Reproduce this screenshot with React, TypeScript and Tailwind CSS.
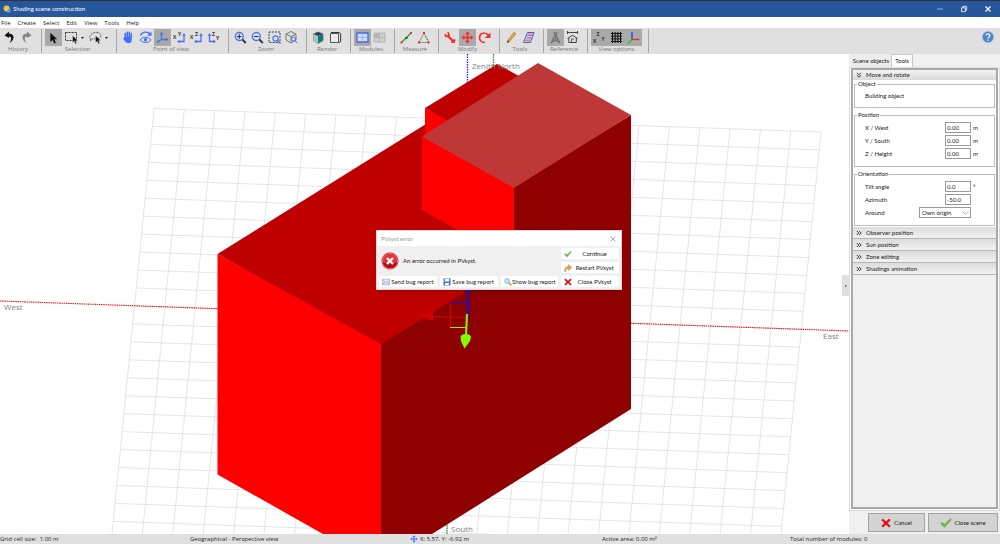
import { useState, type ReactNode } from 'react'
import clsx from 'clsx'

const BLUE = '#4370f5'
const RED = '#f52a2a'

function Icon({ children }: { children: ReactNode }) {
  return (
    <svg viewBox="0 0 17 17" className="h-[17px] w-[17px]" fill="none" aria-hidden="true">
      {children}
    </svg>
  )
}

function AxisLetter({ x, y, children }: { x: number; y: number; children: string }) {
  return (
    <text x={x} y={y} fontSize="5" fontWeight="700" fill="#333">
      {children}
    </text>
  )
}

const cursor = 'M0 0 L0 8 L1.9 6.4 L3.4 9.4 L4.9 8.7 L3.5 5.8 L6 5.6 Z'
const arrow = 'M8 2.5 L3.5 6.5 L8 9 V7.4 C11 7.4 10.5 11 8.5 14.3 C13.5 11.5 14.5 5 8 4.6 Z'
const moveCross =
  'M8.5 2.5 L11 5.3 H9.3 V7.7 H11.7 V6 L14.5 8.5 L11.7 11 V9.3 H9.3 V11.7 H11 L8.5 14.5 L6 11.7 H7.7 V9.3 H5.3 V11 L2.5 8.5 L5.3 6 V7.7 H7.7 V5.3 H6 Z'

type Tool = { name: string; icon: ReactNode; active?: boolean; menu?: boolean }

const GROUPS: { label: string; tools: Tool[] }[] = [
  {
    label: 'History',
    tools: [
      { name: 'Undo', icon: <path d={arrow} fill="#111" /> },
      { name: 'Redo', icon: <path d={arrow} fill="#858585" transform="matrix(-1 0 0 1 17 0)" /> },
    ],
  },
  {
    label: 'Selection',
    tools: [
      {
        name: 'Select',
        active: true,
        icon: <path d={cursor} fill="#111" transform="translate(5.3 3.7) scale(1.15)" />,
      },
      {
        name: 'Rectangle selection',
        menu: true,
        icon: (
          <>
            <path d="M3.5 3.5 H14.5 V11.5 H3.5 Z" stroke="#333" strokeDasharray="2 1" />
            <path d={cursor} fill="#111" stroke="#e0e0e0" strokeWidth="0.5" transform="translate(10.5 6.5) scale(0.9)" />
          </>
        ),
      },
      {
        name: 'Lasso selection',
        menu: true,
        icon: (
          <>
            <path d="M5 11 C1 7 7 2.5 12 3.5 C17 5 15 10 9.5 10 C6 10 5 9 4.5 12" stroke="#555" strokeDasharray="2 1" />
            <path d={cursor} fill="#111" stroke="#e0e0e0" strokeWidth="0.5" transform="translate(9.5 6.5) scale(0.9)" />
          </>
        ),
      },
    ],
  },
  {
    label: 'Point of view',
    tools: [
      {
        name: 'Pan',
        icon: (
          <path
            d="M5.2 8 V4.6 M7.2 8 V3.4 M9.2 8 V3.2 M11.2 8 V4.6 M5.2 8.5 H11 V10.5 C11 13 10 13.5 8.5 13.5 C6.5 13.5 5.5 12 4 9.5"
            stroke={BLUE}
            strokeWidth="1.6"
            strokeLinecap="round"
            fill={BLUE}
          />
        ),
      },
      {
        name: 'Orbit',
        icon: (
          <>
            <path d="M3.5 6.5 C5 2.5 10.5 2 13 5" stroke={BLUE} strokeWidth="1.3" />
            <path d="M14.5 2.5 V6.8 H10.2 Z" fill={BLUE} />
            <path d="M3 11 C5.5 7.3 11.5 7.3 14 11 C11.5 14.3 5.5 14.3 3 11 Z" stroke={BLUE} />
            <circle cx="8.5" cy="10.8" r="1.7" fill={BLUE} />
          </>
        ),
      },
      {
        name: 'Perspective',
        active: true,
        icon: (
          <>
            <path d="M7.5 4.5 V10.5 H13 M7.5 10.5 L4 12.5" stroke={BLUE} strokeWidth="1.3" />
            <path d="M7.5 2.8 L9.3 5.5 H5.7 Z M14.5 10.5 L11.8 12.3 V8.7 Z M2.5 13.4 L4 10.7 L5.8 13.4 Z" fill={BLUE} />
          </>
        ),
      },
      {
        name: 'Top view',
        icon: (
          <>
            <AxisLetter x={2} y={10}>X</AxisLetter>
            <AxisLetter x={7} y={6.5}>Y</AxisLetter>
            <path d="M13 6 V12.5 H8" stroke={BLUE} strokeWidth="1.3" />
            <path d="M13 4 L14.8 6.7 H11.2 Z M6 12.5 L8.7 10.7 V14.3 Z" fill={BLUE} />
          </>
        ),
      },
      {
        name: 'Front view',
        icon: (
          <>
            <AxisLetter x={2} y={10}>X</AxisLetter>
            <AxisLetter x={7} y={6.5}>Z</AxisLetter>
            <path d="M13 6 V12.5 H8" stroke={BLUE} strokeWidth="1.3" />
            <path d="M13 4 L14.8 6.7 H11.2 Z M6 12.5 L8.7 10.7 V14.3 Z" fill={BLUE} />
          </>
        ),
      },
      {
        name: 'Side view',
        icon: (
          <>
            <AxisLetter x={7} y={6.5}>Z</AxisLetter>
            <AxisLetter x={11} y={11}>Y</AxisLetter>
            <path d="M4.5 6 V12.5 H9" stroke={BLUE} strokeWidth="1.3" />
            <path d="M4.5 4 L6.3 6.7 H2.7 Z M11 12.5 L8.3 10.7 V14.3 Z" fill={BLUE} />
          </>
        ),
      },
    ],
  },
  {
    label: 'Zoom',
    tools: [
      {
        name: 'Zoom in',
        icon: (
          <>
            <circle cx="7.3" cy="7.5" r="4" stroke={BLUE} strokeWidth="1.3" />
            <path d="M5 7.5 H9.6 M7.3 5.2 V9.8" stroke="#333" strokeWidth="1.1" />
            <path d="M10.3 10.5 L13.8 14" stroke="#333" strokeWidth="1.8" />
          </>
        ),
      },
      {
        name: 'Zoom out',
        icon: (
          <>
            <circle cx="7.3" cy="7.5" r="4" stroke={BLUE} strokeWidth="1.3" />
            <path d="M5 7.5 H9.6" stroke="#333" strokeWidth="1.1" />
            <path d="M10.3 10.5 L13.8 14" stroke="#333" strokeWidth="1.8" />
          </>
        ),
      },
      {
        name: 'Zoom window',
        icon: (
          <>
            <path d="M3 3 H14 V13.5 H3 Z" stroke="#444" strokeDasharray="2 1" />
            <circle cx="9.5" cy="9.5" r="2.6" stroke={BLUE} strokeWidth="1.1" fill="#e0e0e0" />
            <path d="M11.5 11.5 L14.5 14.5" stroke={BLUE} strokeWidth="1.4" />
          </>
        ),
      },
      {
        name: 'Zoom all',
        icon: (
          <>
            <path d="M8 2.5 L13 5 V11 L8 14 L3 11 V5 Z M3 5 L8 7.5 L13 5 M8 7.5 V14" stroke="#777" />
            <circle cx="10.5" cy="10" r="2" stroke={BLUE} fill="#e0e0e0" />
            <path d="M12 11.5 L14 14" stroke={BLUE} />
          </>
        ),
      },
    ],
  },
  {
    label: 'Render',
    tools: [
      {
        name: 'Shaded',
        icon: (
          <>
            <path d="M8 3 L13 5 V11.5 L8 14.5 L3.5 11.5 V5 Z" fill="#fff" stroke="#444" strokeWidth="0.6" />
            <path d="M8 7 L13 5 V11.5 L8 14.5 Z" fill="#157878" />
            <path d="M3.5 5 L8 7 V14.5 L3.5 11.5 Z" fill="#a5c4c2" />
            <path d="M8 3 L13 5 L8 7 L3.5 5 Z" fill="#21484a" />
          </>
        ),
      },
      {
        name: 'Wireframe',
        icon: (
          <>
            <path d="M3.5 4.5 H11.5 V13.5 H3.5 Z" stroke="#555" fill="#eaeaea" />
            <path d="M4 3.5 H12.5 L13.7 5 V12.5 L12 13.7" stroke="#333" />
          </>
        ),
      },
    ],
  },
  {
    label: 'Modules',
    tools: [
      {
        name: 'Module table',
        active: true,
        icon: (
          <>
            <path d="M3 4 H14 V13 H3 Z" fill="#d2dcff" stroke="#3f6ae0" strokeWidth="1.3" />
            <path d="M3 8.5 H14 M8.5 4 V13" stroke="#8fa5e8" strokeWidth="0.7" />
          </>
        ),
      },
      {
        name: 'Module layout',
        icon: (
          <>
            <path d="M3 4 H14 V13 H3 Z" fill="#cfcfcf" stroke="#b4b4b4" />
            <path d="M3 8.5 H14 M8.5 4 V13" stroke="#b4b4b4" />
            <path d="M3.5 4.5 H8 V8 H3.5 Z" fill="#b4b4b4" />
          </>
        ),
      },
    ],
  },
  {
    label: 'Measure',
    tools: [
      {
        name: 'Distance',
        icon: (
          <>
            <path d="M3.5 13.5 L13 4" stroke="#249a36" strokeWidth="1.3" />
            <path d="M7.5 8 H9.5 V10 H7.5 Z" fill="#124f1c" />
            <path d="M2.5 12.5 H4.5 V14.5 H2.5 Z M12 3 H14 V5 H12 Z" fill={RED} />
          </>
        ),
      },
      {
        name: 'Angle',
        icon: (
          <>
            <path d="M9 4 L4 13.5 H13.5" stroke="#777" strokeDasharray="2 0.7" />
            <path d="M9 4 L13.5 13" stroke="#249a36" strokeWidth="1.2" strokeDasharray="2 1" />
            <path d="M8 3 H10 V5 H8 Z M3 12.5 H5 V14.5 H3 Z M12.5 12.5 H14.5 V14.5 H12.5 Z" fill={RED} />
          </>
        ),
      },
    ],
  },
  {
    label: 'Modify',
    tools: [
      {
        name: 'Properties',
        icon: (
          <>
            <path d="M6 7 L12 13" stroke={RED} strokeWidth="2.2" strokeLinecap="round" />
            <path d="M6 3 L7 6.5 L4 7.5 L3 5 M10 14 L10.5 11.5 L13.5 11" stroke={RED} strokeWidth="1.6" />
          </>
        ),
      },
      { name: 'Move', active: true, icon: <path d={moveCross} fill={RED} /> },
      {
        name: 'Rotate',
        icon: (
          <>
            <path d="M9 13.5 C1.5 13.5 2 3.8 8.5 4 C10.5 4 11.5 5 12.3 6.2" stroke={RED} strokeWidth="1.7" />
            <path d="M14.5 3.5 V9 H9 Z" fill={RED} />
          </>
        ),
      },
    ],
  },
  {
    label: 'Tools',
    tools: [
      {
        name: 'Edit',
        icon: (
          <>
            <path d="M4 14 L4.8 11.2 L11 3.3 L13 4.8 L6.7 12.6 Z" fill="#e5a836" stroke="#8d6a2b" strokeWidth="0.5" />
            <path d="M4 14 L4.8 11.2 L6.7 12.6 Z" fill="#5b4a33" />
          </>
        ),
      },
      {
        name: 'Partition',
        icon: (
          <>
            <path d="M7.5 3.5 H14 L10.5 13.5 H3.5 Z" fill="#e8edff" stroke="#415fc4" />
            <path d="M6.5 6.5 H13 M5.5 10 H12" stroke="#415fc4" strokeWidth="0.7" />
            <path d="M8 5 H12.5 M7 8.3 H11.5 M5 11.8 H10" stroke={RED} strokeWidth="0.9" />
          </>
        ),
      },
    ],
  },
  {
    label: 'Reference',
    tools: [
      {
        name: 'Compass',
        active: true,
        icon: (
          <>
            <path d="M8.5 5 L4 14 L8.5 11.5 L13 14 Z" fill="#848484" stroke="#5e5e5e" strokeWidth="0.7" />
            <path d="M7.3 5.3 V3 L9.7 5.3 V3" stroke="#555" strokeWidth="0.7" />
          </>
        ),
      },
      {
        name: 'House reference',
        icon: (
          <>
            <path d="M3.5 3.5 H13.5 M3.5 2 V5 M13.5 2 V5" stroke="#444" />
            <path d="M3.5 9.5 L8.5 6.3 L13.5 9.5 M4.8 9 V13.5 H12.3 V9" stroke="#444" />
            <path d="M7.5 13.5 V10 H10" stroke="#444" strokeWidth="0.8" />
          </>
        ),
      },
    ],
  },
  {
    label: 'View options',
    tools: [
      {
        name: 'Axis names',
        active: true,
        icon: (
          <>
            <AxisLetter x={2} y={14}>X</AxisLetter>
            <AxisLetter x={5.5} y={7}>Z</AxisLetter>
            <AxisLetter x={10.5} y={11.5}>Y</AxisLetter>
          </>
        ),
      },
      {
        name: 'Grid',
        active: true,
        icon: <path d="M4.5 3 V14 M7.2 3 V14 M9.9 3 V14 M12.5 3 V14 M3 4.5 H14 M3 7.2 H14 M3 9.9 H14 M3 12.5 H14" stroke="#111" />,
      },
      {
        name: 'Axes',
        active: true,
        icon: (
          <>
            <path d="M7 3 V10.5" stroke="#2734e0" strokeWidth="1.3" />
            <path d="M7 10.5 H14.5" stroke="#e03030" strokeWidth="1.3" />
            <path d="M7 10.5 L3 14.5" stroke="#22c922" strokeWidth="1.7" />
          </>
        ),
      },
    ],
  },
]

function Toolbar() {
  return (
    <div className="flex h-[26px] items-stretch bg-[#e0e0e0]">
      {GROUPS.map((g) => (
        <div key={g.label} className="flex py-px pl-[3px] first:pl-px">
          <div className="mr-1.5 flex flex-col items-center">
            <div className="flex">
              {g.tools.map((t) => (
                <button
                  key={t.name}
                  aria-label={t.name}
                  title={t.name}
                  className={clsx('flex h-[17px] items-center', t.active && 'bg-[#a9a9a9]')}
                >
                  <Icon>{t.icon}</Icon>
                  {t.menu && (
                    <svg viewBox="0 0 7 6" className="h-1.5 w-[7px]" aria-hidden="true">
                      <path d="M2 2 H5 L3.5 4 Z" fill="#222" />
                    </svg>
                  )}
                </button>
              ))}
            </div>
            <span className="text-[6px] leading-[7px] text-[#777]">{g.label}</span>
          </div>
          <div className="w-px bg-[#a6a6a6]" />
        </div>
      ))}
      <button aria-label="Help" className="mr-1.5 ml-auto self-start pt-[3px]">
        <svg viewBox="0 0 12 12" className="h-3 w-3" aria-hidden="true">
          <circle cx="6" cy="6" r="5.6" fill="#4a84c4" stroke="#9cb9d8" strokeWidth="0.7" />
          <path d="M4.1 4.5 C4.1 2.2 8 2.3 7.9 4.5 C7.9 5.8 6.1 5.8 6.1 7.4 M6.1 8.4 V9.7" fill="none" stroke="#fff" strokeWidth="1.3" />
        </svg>
      </button>
    </div>
  )
}

function TitleBar() {
  return (
    <header className="flex h-[17px] items-center border-t border-[#333] bg-[#26569c] pl-[3px] text-white">
      <svg viewBox="0 0 8 8" className="h-2 w-2" aria-hidden="true">
        <circle cx="3.6" cy="3.6" r="3" fill="#f7c53b" />
        <path d="M3.5 7.5 C4 5 5 4 7.5 3.5 V7.5 Z" fill="#5ba0dc" />
      </svg>
      <h1 className="ml-0.5 font-['Lato',sans-serif] text-[6px] leading-2">Shading scene construction</h1>
      <div className="ml-auto flex">
        <button aria-label="Minimize" className="flex w-6 justify-center">
          <svg viewBox="0 0 8 8" className="h-2 w-2"><path d="M1 4 H7" stroke="#b9c8e0" strokeWidth="0.8" /></svg>
        </button>
        <button aria-label="Restore" className="flex w-6 justify-center">
          <svg viewBox="0 0 8 8" className="h-2 w-2" fill="none" stroke="#fff" strokeWidth="0.8">
            <path d="M1.5 2.8 H5.3 V6.6 H1.5 Z M2.8 2.8 V1.4 H6.6 V5.2 H5.3" />
          </svg>
        </button>
        <button aria-label="Close" className="flex w-6 justify-center">
          <svg viewBox="0 0 8 8" className="h-2 w-2"><path d="M1.5 1.5 L6.5 6.5 M6.5 1.5 L1.5 6.5" stroke="#fff" strokeWidth="1.2" /></svg>
        </button>
      </div>
    </header>
  )
}

function MenuBar() {
  return (
    <nav className="flex h-[11px] items-center gap-[7px] bg-white pl-px text-[6px] leading-2">
      {['File', 'Create', 'Select', 'Edit', 'View', 'Tools', 'Help'].map((m) => (
        <button key={m}>{m}</button>
      ))}
    </nav>
  )
}

function Scene() {
  return (
    <svg
      viewBox="0 54 849 480"
      preserveAspectRatio="xMidYMid slice"
      className="absolute inset-0 h-full w-full"
      role="img"
      aria-label="3D scene"
    >
      <g stroke="#dedede" strokeWidth="0.8">
        {Array.from({ length: 23 }, (_, i) => (
          <line key={`c${i}`} x1={154 + i * 30.32} y1={108.5 + i * 1.07} x2={112 + i * 30.41} y2={534} />
        ))}
        {Array.from({ length: 25 }, (_, j) => (
          <line key={`r${j}`} x1={154 - j * 1.77} y1={108.5 + j * 17.95} x2={821 - j * 1.79} y2={132 + j * 17.93} />
        ))}
      </g>
      <line x1="0" y1="301" x2="849" y2="331" stroke="#f01818" strokeWidth="1.1" strokeDasharray="1.5 0.7" />
      <line x1="467.5" y1="54" x2="467.5" y2="90" stroke="#3030ff" strokeWidth="1.4" strokeDasharray="1.5 1" />
      <line x1="493.5" y1="54" x2="493.5" y2="68" stroke="#2b8a2b" strokeWidth="1.4" strokeDasharray="1.5 1" />
      <line x1="447" y1="520" x2="447" y2="534" stroke="#2b9a2b" strokeWidth="1.4" strokeDasharray="1.5 1" />

      {/* faces overlap slightly so no background shows along shared edges */}
      {/* main volume */}
      <path d="M217.5 254 L430 121.5 L631 189 V193 L381 348 Z" fill="#bf0000" />
      <path d="M217.5 254 L381.5 344.5 V534 H323 L217.5 474.5 Z" fill="#ff0000" />
      <path d="M381 344.5 L631 189 V409 L432 534 H381 Z" fill="#8f0000" />
      {/* rear volume */}
      <path d="M425 108 L497 64 L519 76 L450 124 Z" fill="#bf0000" />
      <path d="M425 108 L450 122 L425 138 Z" fill="#ff0000" />
      {/* upper volume */}
      <path d="M422 136.5 L514.5 186 V262 L422 210 Z" fill="#ff0000" />
      <path d="M514 186 L631 115 V192 L514 264 Z" fill="#8f0000" />
      <path d="M567 228.5 L631 189" stroke="#a60000" strokeWidth="0.7" />
      <path d="M538 63 L631 115 L514 188 L422 136.5 Z" fill="#bf3838" />

      {/* move handles */}
      <g fill="none">
        <path d="M450.5 303 V327.5 M433 316.5 L467 317.5" stroke="#d40000" />
        <path d="M450 303 H467 M464 291.5 H472" stroke="#1a10d0" />
        <path d="M468 290 V318" stroke="#1a10d0" strokeWidth="2" />
        <path d="M450 327.5 H467" stroke="#b5e000" />
        <path d="M467 314 L466 336" stroke="#80ff00" strokeWidth="2" />
      </g>
      <path d="M417 315.5 L433 311.5 V321 Z" fill="#d20000" />
      <path d="M460.5 337 C461 333 470.5 333 471 337 L470 341 L464.5 348.5 L461 341 Z" fill="#80ff00" />

      <g fontSize="8" fill="#808080">
        <text x="4" y="310">West</text>
        <text x="823" y="339">East</text>
        <text x="472" y="69">Zenith</text>
        <text x="498" y="69">North</text>
        <text x="451" y="532">South</text>
      </g>
    </svg>
  )
}

function Cross({ className }: { className: string }) {
  return (
    <svg viewBox="0 0 10 10" className={className} aria-hidden="true">
      <path d="M1.8 0.6 L5 3.4 L8.2 0.6 L9.6 2.2 L6.8 5 L9.6 8 L8.2 9.5 L5 6.7 L1.8 9.5 L0.4 8 L3.2 5 L0.4 2.2 Z" fill="#e01414" />
    </svg>
  )
}

function Check({ className }: { className: string }) {
  return (
    <svg viewBox="0 0 12 10" className={className} aria-hidden="true">
      <path d="M0.3 5.5 L2.3 4 L4.4 6.3 L10.5 0.2 L11.7 1.4 L4.6 9.8 Z" fill="#6cb33f" />
    </svg>
  )
}

function DialogButton({ icon, children }: { icon: ReactNode; children: string }) {
  return (
    <button className="flex h-[11px] w-full items-center bg-white pr-0.5 pl-[3px]">
      <span className="shrink-0">{icon}</span>
      <span className="flex-1 text-center whitespace-nowrap">{children}</span>
    </button>
  )
}

function ErrorDialog() {
  return (
    <div className="absolute inset-x-0 top-[230px] flex justify-center pr-0.5">
      <div
        role="dialog"
        aria-labelledby="dialog-title"
        className="w-[246px] border border-[#d8d8d8] bg-[#f0f0f0] font-['Lato',sans-serif] text-[6px] leading-2 shadow-md"
      >
        <div className="flex h-[15px] items-center justify-between bg-white pr-1 pl-1">
          <h2 id="dialog-title" className="text-[#999]">PVsyst error</h2>
          <button aria-label="Close dialog">
            <svg viewBox="0 0 8 8" className="h-2 w-2"><path d="M1.5 1.5 L6.5 6.5 M6.5 1.5 L1.5 6.5" stroke="#888" strokeWidth="0.7" /></svg>
          </button>
        </div>
        <div className="grid grid-cols-4 gap-x-[3px] gap-y-[3px] px-0.5 pt-0.5 pb-0.5">
          <div className="col-span-3 row-span-2 flex items-center gap-1 pl-0.5">
            <svg viewBox="0 0 18 18" className="h-[18px] w-[18px]" aria-hidden="true">
              <circle cx="9" cy="9" r="8.5" fill="#c4141c" />
              <circle cx="9" cy="9" r="7.6" fill="#e0353a" stroke="#f4a9a9" strokeWidth="0.6" />
              <path d="M2 10 C5 12 13 12 16 10 C15 18 3 18 2 10 Z" fill="#b30d12" />
              <path d="M6 6 L12 12 M12 6 L6 12" stroke="#fff" strokeWidth="2.2" />
            </svg>
            <p>An error occurred in PVsyst.</p>
          </div>
          <DialogButton icon={<Check className="h-2 w-2" />}>Continue</DialogButton>
          <DialogButton
            icon={
              <svg viewBox="0 0 8 8" className="h-2 w-2" aria-hidden="true">
                <path d="M0.5 7.5 C0.5 4 2 2.6 4.5 2.6 V0.6 L7.7 3.6 L4.5 6.4 V4.6 C2.6 4.6 1.7 5.5 1.7 7.5 Z" fill="#eba43a" stroke="#a3722c" strokeWidth="0.4" />
              </svg>
            }
          >
            Restart PVsyst
          </DialogButton>
          <DialogButton
            icon={
              <svg viewBox="0 0 8 8" className="h-2 w-2" aria-hidden="true">
                <path d="M0.4 1.3 H7.6 V6.7 H0.4 Z M0.4 1.3 L4 4.3 L7.6 1.3 M0.4 6.7 L3 3.6 M7.6 6.7 L5 3.6" fill="#dfe4fa" stroke="#8d9bd6" strokeWidth="0.6" />
              </svg>
            }
          >
            Send bug report
          </DialogButton>
          <DialogButton
            icon={
              <svg viewBox="0 0 8 8" className="h-2 w-2" aria-hidden="true">
                <path d="M0.5 0.5 H7.5 V7.5 H0.5 Z" fill="#3d73cf" />
                <path d="M1.8 1 H6.2 V3.6 H1.8 Z M2.2 5 H5.8 V7.2 H2.2 Z" fill="#fff" />
              </svg>
            }
          >
            Save bug report
          </DialogButton>
          <DialogButton
            icon={
              <svg viewBox="0 0 8 8" className="h-2 w-2" aria-hidden="true">
                <path d="M4.6 4.6 L7.4 7.4" stroke="#c98a3a" strokeWidth="1.4" />
                <circle cx="3" cy="3" r="2.4" fill="#c4e2fa" stroke="#7fa9d4" strokeWidth="0.7" />
              </svg>
            }
          >
            Show bug report
          </DialogButton>
          <DialogButton icon={<Cross className="h-2 w-2" />}>Close PVsyst</DialogButton>
        </div>
      </div>
    </div>
  )
}

function Field({ label, value, unit }: { label: string; value: string; unit?: string }) {
  return (
    <label className="flex items-center">
      <span className="flex-1">{label}</span>
      <input
        defaultValue={value}
        className="h-[11px] w-[26px] border border-[#999] bg-white px-px text-[6px] leading-2"
      />
      <span className="w-[22px] pl-0.5">{unit}</span>
    </label>
  )
}

function Group({ title, children }: { title: string; children: ReactNode }) {
  return (
    <fieldset className="border border-[#bdbdbd] pr-px pl-2.5">
      <legend className="-ml-2 px-px leading-2">{title}</legend>
      {children}
    </fieldset>
  )
}

function Chevrons({ open }: { open?: boolean }) {
  return (
    <svg viewBox="0 0 6 6" className={clsx('h-1.5 w-1.5', open && 'rotate-90')} aria-hidden="true">
      <path d="M0.8 1 L2.8 3 L0.8 5 M3.2 1 L5.2 3 L3.2 5" fill="none" stroke="#222" strokeWidth="0.9" />
    </svg>
  )
}

function SidePanel() {
  const [around, setAround] = useState('Own origin')

  return (
    <aside className="flex w-[151px] flex-col bg-[#f0f0f0] font-['Lato',sans-serif] text-[6px] leading-2">
      <div role="tablist" className="flex h-[13px] items-end pl-0.5">
        <button role="tab" aria-selected="false" className="h-3 w-10 bg-[#ececec]">
          Scene objects
        </button>
        <button role="tab" aria-selected="true" className="h-[13px] w-[22px] border border-b-0 border-[#c8c8c8] bg-white">
          Tools
        </button>
      </div>
      <div className="flex-1 border border-[#dcdcdc] bg-white px-px pb-px">
        <div className="h-full border-2 border-[#a9a9a9] bg-[#f0f0f0]">
          <button className="flex h-2.5 w-full items-center gap-1 bg-linear-to-b from-[#f4f4f4] to-[#dadada] pl-[3px]">
            <Chevrons open />
            Move and rotate
          </button>
          <div className="flex flex-col gap-[3px] bg-white px-px pb-px">
            <Group title="Object">
              <p className="pt-1 pb-[7px]">Building object</p>
            </Group>
            <Group title="Position">
              <div className="flex flex-col gap-0.5 pt-[3px] pb-[7px]">
                <Field label="X / West" value="0.00" unit="m" />
                <Field label="Y / South" value="0.00" unit="m" />
                <Field label="Z / Height" value="0.00" unit="m" />
              </div>
            </Group>
            <Group title="Orientation">
              <div className="flex flex-col gap-0.5 pt-[3px] pb-[7px]">
                <Field label="Tilt angle" value="0.0" unit="°" />
                <Field label="Azimuth" value="-50.0" />
                <label className="flex items-center pr-[22px]">
                  <span className="flex-1">Around</span>
                  <span className="relative">
                    <select
                      value={around}
                      onChange={(e) => setAround(e.target.value)}
                      className="block h-[11px] w-[52px] appearance-none border border-[#999] bg-white pl-0.5 text-[6px] leading-2"
                    >
                      <option>Own origin</option>
                      <option>Scene origin</option>
                    </select>
                    <svg viewBox="0 0 7 4" className="pointer-events-none absolute top-1 right-0.5 h-1 w-[7px]" aria-hidden="true">
                      <path d="M0.5 0.5 L3.5 3.3 L6.5 0.5" fill="none" stroke="#888" strokeWidth="0.7" />
                    </svg>
                  </span>
                </label>
              </div>
            </Group>
          </div>
          {['Observer position', 'Sun position', 'Zone editing', 'Shadings animation'].map((s) => (
            <button
              key={s}
              className="flex h-3 w-full items-center gap-1 border-b border-[#b5b5b5] bg-linear-to-b from-[#dcdcdc] to-[#f2f2f2] pl-[3px]"
            >
              <Chevrons />
              {s}
            </button>
          ))}
        </div>
      </div>
      <div className="flex justify-end gap-[3px] pt-0.5 pr-0.5 pb-0.5">
        <button className="flex h-[19px] w-[57px] items-center justify-center gap-[3px] border border-[#a3a3a3] bg-[#d3d3d3]">
          <Cross className="h-2.5 w-2.5" />
          Cancel
        </button>
        <button className="flex h-[19px] w-[70px] items-center justify-center gap-0.5 border border-[#a3a3a3] bg-[#d3d3d3]">
          <Check className="h-2.5 w-3" />
          Close scene
        </button>
      </div>
    </aside>
  )
}

function StatusBar() {
  return (
    <footer className="flex h-2.5 items-center bg-[#e0e0e0] text-[6px] leading-2 text-[#222]">
      <span className="w-[19%]">Grid cell size:&nbsp; 1.00 m</span>
      <span className="w-[22%]">Geographical - Perspective view</span>
      <span className="flex w-[19%] items-center gap-0.5">
        <svg viewBox="2 2 13 13" className="h-2 w-2" aria-hidden="true">
          <path d={moveCross} fill={BLUE} />
        </svg>
        X: 5.57, Y: -6.92 m
      </span>
      <span className="w-[19%] pl-0.5">Active area: 0.00 m²</span>
      <span>Total number of modules: 0</span>
    </footer>
  )
}

export default function App() {
  return (
    <div className="relative flex min-h-screen flex-col bg-white font-['Open_Sans',sans-serif] text-[#1a1a1a]">
      <TitleBar />
      <MenuBar />
      <Toolbar />
      <main className="flex flex-1">
        <div className="relative flex flex-1 items-center justify-end overflow-hidden bg-white">
          <Scene />
          <button aria-label="Collapse panel" className="relative mb-[17px] flex h-[21px] w-[7px] items-center justify-center bg-[#e0e0e0]">
            <svg viewBox="0 0 4 4" className="h-1 w-1"><path d="M1 0.5 L3 2 L1 3.5 Z" fill="#777" /></svg>
          </button>
        </div>
        <SidePanel />
      </main>
      <StatusBar />
      <ErrorDialog />
    </div>
  )
}
